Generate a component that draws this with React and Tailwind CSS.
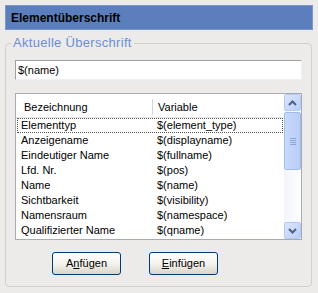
import React from "react";

const rows = [
  ["Elementtyp", "$(element_type)"],
  ["Anzeigename", "$(displayname)"],
  ["Eindeutiger Name", "$(fullname)"],
  ["Lfd. Nr.", "$(pos)"],
  ["Name", "$(name)"],
  ["Sichtbarkeit", "$(visibility)"],
  ["Namensraum", "$(namespace)"],
  ["Qualifizierter Name", "$(qname)"],
];

function Arrow({ up }) {
  return (
    <svg width="9" height="6" viewBox="0 0 9 6">
      <path
        d={up ? "M1 5 L4.5 1.5 L8 5" : "M1 1 L4.5 4.5 L8 1"}
        fill="none"
        stroke="#4D6185"
        strokeWidth="2"
      />
    </svg>
  );
}

function XPButton({ children }) {
  return (
    <button className="w-[69px] h-[23px] rounded-[3px] border border-[#003C74] bg-gradient-to-b from-[#FFFFFF] via-[#F4F3EE] to-[#D9D5CB] text-[11px] text-black flex items-center justify-center">
      {children}
    </button>
  );
}

export default function App() {
  return (
    <div
      className="w-[318px] h-[293px] bg-[#ECEBEA] p-[5px] flex flex-col"
      style={{ fontFamily: '"Liberation Sans", Arial, sans-serif' }}
    >
      <div className="h-[25px] bg-[#5B7FBC] flex items-center pl-[5px] border border-[#7B97C9]">
        <span className="text-[12px] font-bold text-black">Elementüberschrift</span>
      </div>
      <fieldset className="mt-[6px] mr-[1px] h-[251px] border border-[#D0D0CC] rounded-[4px] px-[9px] pb-0">
        <legend className="ml-[-4px] px-[2px] text-[13px] tracking-[0.3px] text-[#6B8ED4] leading-[14px]">
          Aktuelle Überschrift
        </legend>
        <div className="mt-[10px] h-[20px] bg-white border-t border-l border-[#A0A0A0] border-r border-b border-r-[#F0F0F0] border-b-[#F0F0F0] flex items-center pl-[2px] text-[11px] text-black">
          $(name)
        </div>
        <div className="mt-[13px] h-[147px] bg-white border border-[#A5ACB5] flex">
          <div className="flex-1 flex flex-col">
            <div className="h-[24px] pt-[3px] flex items-center text-[11px] text-black border-b border-[#E6E6E6]">
              <div className="w-[137px] pl-[8px] border-r border-[#D4D4D4] h-[16px] flex items-center">Bezeichnung</div>
              <div className="pl-[5px]">Variable</div>
            </div>
            {rows.map(([a, b], i) => (
              <div
                key={a}
                className={
                  "h-[15px] flex items-center text-[11px] text-black mx-[1px] " +
                  (i === 0 ? "border border-dotted border-[#555]" : "border border-transparent")
                }
              >
                <div className="w-[137px] pl-[3px]">{a}</div>
                <div className="pl-[2px]">{b}</div>
              </div>
            ))}
          </div>
          <div className="w-[17px] flex flex-col bg-gradient-to-r from-[#F3F5FB] to-[#FDFDFE]">
            <div className="h-[17px] rounded-[2px] border border-[#B7C9F2] bg-gradient-to-br from-[#DCE6FC] to-[#B9CEF8] flex items-center justify-center">
              <Arrow up />
            </div>
            <div className="mt-[1px] h-[58px] rounded-[2px] border border-[#A4BCEB] bg-gradient-to-r from-[#C8D9FC] to-[#B9CDF7] flex flex-col items-center justify-center gap-[1px]">
              <div className="w-[6px] h-[1px] bg-[#8CA8E0]" />
              <div className="w-[6px] h-[1px] bg-[#8CA8E0]" />
              <div className="w-[6px] h-[1px] bg-[#8CA8E0]" />
              <div className="w-[6px] h-[1px] bg-[#8CA8E0]" />
            </div>
            <div className="flex-1" />
            <div className="h-[17px] rounded-[2px] border border-[#B7C9F2] bg-gradient-to-br from-[#DCE6FC] to-[#B9CEF8] flex items-center justify-center">
              <Arrow />
            </div>
          </div>
        </div>
        <div className="mt-[12px] ml-[37px] flex gap-[28px]">
          <XPButton>
            <span>
              A<span className="underline">n</span>fügen
            </span>
          </XPButton>
          <XPButton>
            <span>
              <span className="underline">E</span>infügen
            </span>
          </XPButton>
        </div>
      </fieldset>
    </div>
  );
}
